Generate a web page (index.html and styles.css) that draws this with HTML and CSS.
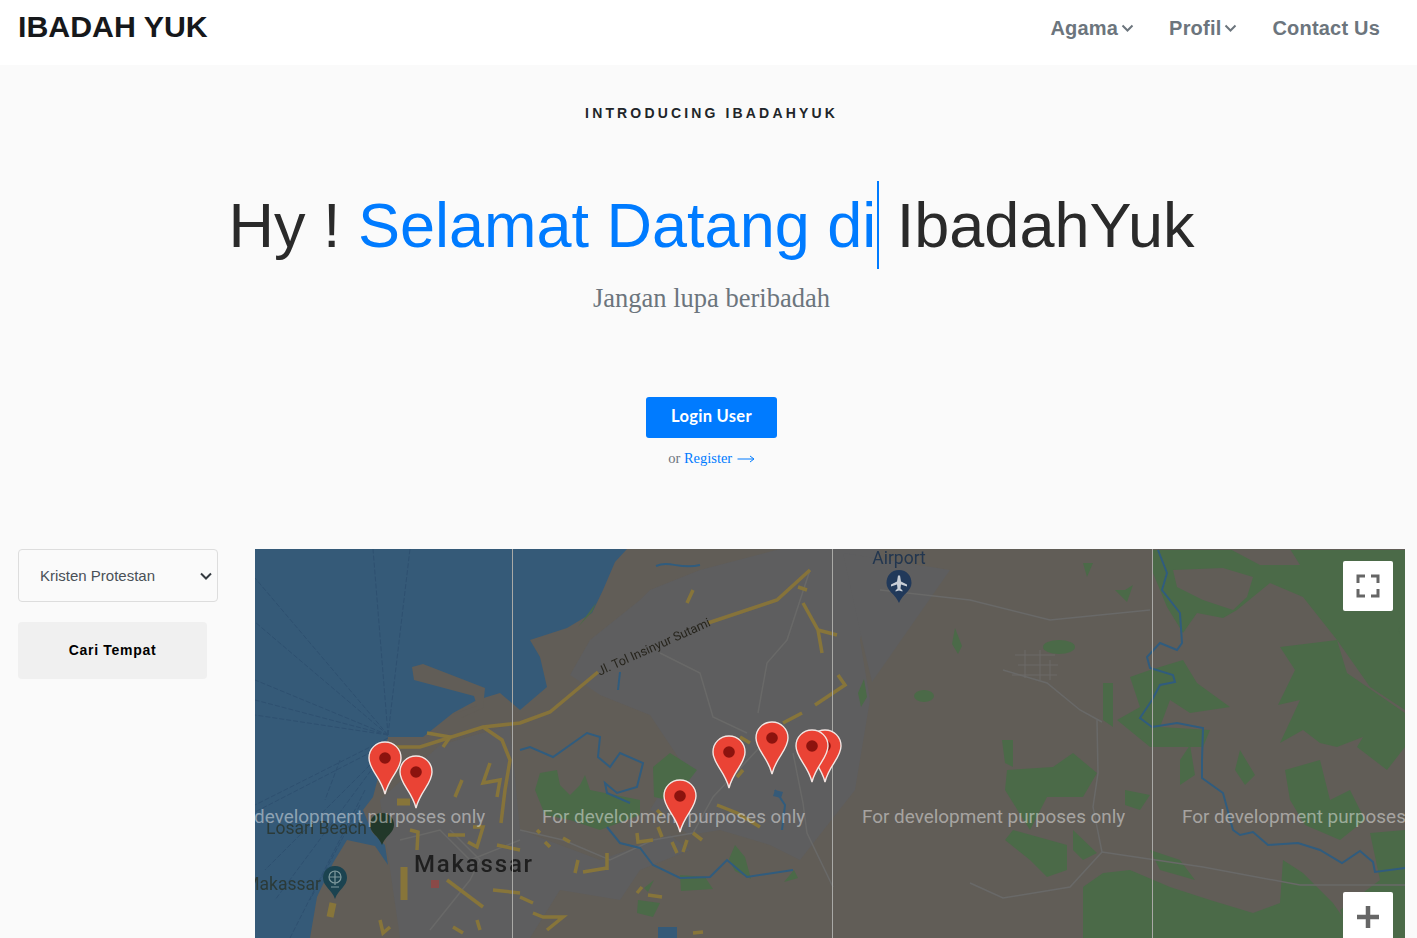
FILE: index.html
```html
<!DOCTYPE html>
<html lang="en">
<head>
  <meta charset="UTF-8" />
  <meta name="viewport" content="width=device-width, initial-scale=1.0" />
  <title>Ibadah Yuk</title>
  <link rel="stylesheet" href="styles.css">
</head>
<body>
  <nav class="navbar">
    <a class="brand" href="#">IBADAH YUK</a>
    <ul class="nav-links">
      <li><a href="#">Agama<svg class="caret" viewBox="0 0 12 8"><path d="M1 1.500l5 5 5-5"/></svg></a></li>
      <li><a href="#">Profil<svg class="caret" viewBox="0 0 12 8"><path d="M1 1.500l5 5 5-5"/></svg></a></li>
      <li><a href="#">Contact Us</a></li>
    </ul>
  </nav>

  <section class="hero">
    <p class="eyebrow">INTRODUCING IBADAHYUK</p>
    <h1 class="headline">Hy ! <span class="typed">Selamat Datang di</span> IbadahYuk</h1>
    <p class="tagline">Jangan lupa beribadah</p>
    <a class="btn-login" href="#">Login User</a>
    <p class="register">or <a href="#">Register <svg class="arrow" viewBox="0 0 17 8"><path d="M0 4h16M12.500 1l4 3-4 3"/></svg></a></p>
  </section>

  <section class="finder">
    <div class="filters">
      <div class="select-wrap">
        <select class="agama-select">
          <option>Kristen Protestan</option>
          <option>Islam</option>
          <option>Katolik</option>
          <option>Hindu</option>
          <option>Buddha</option>
        </select>
        <svg class="select-caret" viewBox="0 0 12 8"><path d="M1 1.500l5 5 5-5"/></svg>
      </div>
      <button class="btn-search">Cari Tempat</button>
    </div>

    <div class="map">
      <svg class="map-canvas" viewBox="255 549 1150 389">
        <defs>
          <symbol id="pin" viewBox="0 0 34 54">
            <path class="pin-body" d="M17 1C8 1 1 8 1 17c0 12 12 19 16 36 4-17 16-24 16-36C33 8 26 1 17 1z"/>
            <circle class="pin-dot" cx="17" cy="17" r="5.800"/>
          </symbol>
          <path id="tol" d="M598 672L725 615"/>
        </defs>

        <g class="basemap">
          <!-- sea and land -->
          <rect class="land" x="255" y="549" width="1150" height="389"/>
          <path class="water" d="M255 549H627L615 562 603 590 592 613 567 628 530 640 540 657 547 687 520 710 500 693 477 700 453 713 423 737 388 737 380 770 373 797 363 810 372 832 385 845 388 865 375 846 347 840 333 863 317 897 310 938H255z"/>
          <path class="land" d="M412 667l2 13 60 16 3 10-24 8 8 4 22-10 2-20-62-24z"/>

          <!-- ferry lanes -->
          <g class="lanes">
            <path d="M388 735L373 549M388 735L410 549M388 735L255 578M388 735L255 622M388 735L255 680M388 735L255 700M388 735L255 715"/>
            <path d="M388 738L255 805M385 745L255 812M380 755L265 870M375 765L275 900M365 790L290 938M360 805L310 900M340 760L325 800"/>
          </g>

          <!-- built up area and airport -->
          <path class="urban" d="M570 675L590 640 640 600 650 590 700 570 780 549H880L860 640 870 700 855 790 800 860 770 845 720 830 690 835 650 810 680 760 650 715 600 695z"/>
          <path class="urban" d="M380 800L440 745 510 725 520 830 600 860 670 835 690 850 640 870 620 900 560 890 530 938H400z"/>
          <path class="urban" d="M843 553L950 570 872 682 862 640z"/>

          <!-- forest -->
          <g class="forest">
            <path d="M1153 550H1405V710L1370 687 1337 640 1303 597 1270 583 1237 610 1223 618 1197 613 1183 633 1167 607 1153 573z"/>
            <path class="land" d="M1173 570L1223 568 1253 577 1247 597 1233 610 1203 600 1177 587zM1230 549H1290L1300 565 1260 565z"/>
            <path d="M1130 677L1150 670 1183 660 1197 683 1230 707 1190 713 1170 700 1160 727 1210 730 1203 747 1183 747 1150 747 1117 720 1140 707z"/>
            <path d="M1280 647L1337 640 1347 673 1405 713V747L1387 770 1357 747 1363 737 1337 747 1320 743 1303 730 1280 743 1300 700 1278 705 1295 670z"/>
            <path d="M1007 770L1053 767 1073 753 1097 773 1083 797 1047 797 1030 830 1005 790z"/>
            <path d="M1002 740L1013 740 1013 767 1005 763zM1103 683L1113 683 1113 727 1103 720zM1083 563L1093 563 1087 577zM1125 590L1133 585 1127 602 1115 590z"/>
            <path d="M1083 887L1103 873 1130 870 1170 887 1210 900 1253 913 1280 903 1283 860 1303 873 1333 903 1357 938H1083z"/>
            <path d="M1370 833L1405 830V938H1350L1340 910 1380 880z"/>
            <path d="M1013 830L1067 845 1067 870 1047 877 1030 860 1005 840zM1073 830L1097 853 1083 860 1073 850z"/>
            <path d="M1285 770L1320 760 1330 800 1350 790 1365 820 1340 840 1305 825 1290 800z"/>
            <path d="M1180 760L1190 745 1195 775 1180 785zM1125 790L1150 795 1140 810 1125 805zM1240 750L1255 775 1245 785 1235 770zM1150 850L1180 860 1195 880 1160 870z"/>
            <ellipse cx="1059" cy="647" rx="16" ry="7"/>
            <ellipse cx="924" cy="696" rx="10" ry="6"/>
            <path d="M858 693l6-14 3 18-6 10z"/>
            <path d="M955 628l7 18-4 8-6-10zM1398 630l7-8v20z"/>
            <path d="M653 767l17-14 27 17-10 13-5 20-28-6z"/>
            <path d="M540 773L557 770 560 785 570 795 580 785 585 775 590 790 640 800 640 815 600 830 570 820 545 815 535 790z"/>
            <path d="M735 845l10 12 6 22-16-8-6-12zM680 875l25 2 8 12-32 2zM638 900l22 3-7 14-16-4zM654 880l-6 12-4-4z"/>
            <path d="M794 870l-10 12 14-4zM592 612l-14 15 18-24z"/>
          </g>

          <!-- minor roads -->
          <g class="road">
            <path d="M660 653L700 673 713 717 747 733"/>
            <path d="M810 570L787 640 767 663 758 713"/>
            <path d="M760 747L713 797 693 833 653 840 610 860 563 840 520 830"/>
            <path d="M793 753L803 803 807 833 833 887"/>
            <path d="M400 840L440 830 470 860 520 840"/>
            <path d="M430 930L470 880 480 860 450 830"/>
            <path d="M1097 720L1098 773 1093 807 1102 852 1070 887 1003 898 970 883"/>
            <path d="M1003 670L1047 683 1080 710 1102 722"/>
            <path d="M1102 852L1203 867 1300 885 1405 885"/>
            <path d="M880 590L970 600 1050 620 1150 610"/>
          </g>

          <!-- rivers -->
          <g class="river">
            <path d="M1158 550L1167 573 1162 590 1180 613 1182 643 1177 650 1160 643 1147 657 1150 668 1173 675 1175 682 1160 685 1152 700 1140 718 1152 727 1177 723 1203 728 1202 760 1202 778 1223 793 1233 830 1240 835 1253 832 1268 845 1298 843 1320 850 1342 863 1360 851 1373 862 1375 872 1405 868"/>
            <path d="M520 750L530 747 553 757 587 733 600 737 598 757 610 767 620 753 643 763 637 787 617 793 605 783 607 793 630 803"/>
            <path d="M607 827L620 843 640 848 653 865 680 878 710 877 727 860 747 877 793 870"/>
            <path d="M656 566C670 560 680 570 700 565M775 790L785 805 782 830M620 672L618 690"/>
          </g>
          <path class="water" d="M658 927l19 0 0 11h-19zM775 790l8 2-2 6-8-2z"/>

          <!-- toll road and arterial streets -->
          <path class="highway" d="M396 747L420 747 483 727 520 723 550 712 598 672"/>
          <path class="highway" d="M708 623L777 600 810 570"/>
          <path class="highway" d="M483 727L502 740 510 760 505 790 501 823"/>
          <g class="street">
            <path d="M693 590l-6 13M798 587l9 3M803 603L818 630 822 653M818 630l19 5M838 675l7 10-30 20M802 713l-19 10"/>
            <path d="M740 737l10 6M743 770l-6 7M717 805l20 8 23 14M657 810l5 5M658 827l4 10M637 833l1 9 15-2M672 842l5 11M687 840l-4 12M693 833l9 7"/>
            <path d="M537 830l3 3M545 842l5 5M563 838l7 4M578 860l-3 13M607 853v17M583 872l24-4M648 895l14 2M637 893l5-6M693 933l10-1"/>
            <path d="M520 897l13 6M533 913l10 4 20 0-16 13"/>
            <path d="M427 733l23 4-7 10M490 763l-7 20 17-3-3 17M462 780l-7 17M448 835h17M473 827h10l-6 20-9-5"/>
            <path d="M410 830l8 2-1 18M447 880l36 27M497 845l23 5M493 890l27 3M380 920l3 13 7-6M453 927l10 6M477 920l3 10"/>
          </g>
          <path class="street-thick" d="M333 903l-3 14M397 802h13M404 867v33"/>

          <!-- faint town grid -->
          <path class="road road-faint" d="M1015 655h40M1018 665h40M1012 675h45M1025 650v28M1040 650v30M1050 660v20"/>

          <!-- labels -->
          <text class="road-label" dy="4"><textPath href="#tol">Jl. Tol Insinyur Sutami</textPath></text>
          <text class="label label-navy" x="899" y="564" text-anchor="middle">Airport</text>
          <text class="label" x="266" y="834">Losari Beach</text>
          <text class="label" x="321" y="890" text-anchor="end">Makassar</text>
          <text class="city" x="414" y="872">Makassar</text>

          <!-- places -->
          <path class="poi-navy" d="M899 570c-8 0-12.500 6-12.500 13 0 8 9 11 12.500 20 3.500-9 12.500-12 12.500-20 0-7-4.500-13-12.500-13z"/>
          <path class="poi-icon" d="M898 575.500h2l1 6 6 3v2l-6-2-.5 4 2 2v1l-3.500-1-3.500 1v-1l2-2-.5-4-6 2v-2l6-3z"/>
          <path class="poi-green" d="M382 813c-8 0-12 6-12 12 0 8 9 11 12 20 3-9 12-12 12-20 0-6-4-12-12-12z"/>
          <path class="poi-teal" d="M335 866c-8 0-12 6-12 12 0 8 9 12 12 21 3-9 12-13 12-21 0-6-4-12-12-12z"/>
          <circle class="poi-ring" cx="335" cy="877" r="6"/>
          <path class="poi-ring" d="M335 871v14M329 877h12M331 887h8"/>
          <rect class="poi-red" x="431" y="880" width="8" height="8"/>
        </g>

        <!-- tile seams -->
        <path class="seam" d="M512.500 549V938M832.500 549V938M1152.500 549V938"/>

        <!-- dev watermark -->
        <text class="watermark" x="222" y="823">For development purposes only</text>
        <text class="watermark" x="542" y="823">For development purposes only</text>
        <text class="watermark" x="862" y="823">For development purposes only</text>
        <text class="watermark" x="1182" y="823">For development purposes only</text>

        <!-- markers -->
        <use href="#pin" x="368" y="741" width="34" height="54"/>
        <use href="#pin" x="399" y="755" width="34" height="54"/>
        <use href="#pin" x="663" y="779" width="34" height="54"/>
        <use href="#pin" x="712" y="735" width="34" height="54"/>
        <use href="#pin" x="755" y="721" width="34" height="54"/>
        <use href="#pin" x="808" y="729" width="34" height="54"/>
        <use href="#pin" x="795" y="729" width="34" height="54"/>
      </svg>

      <button class="map-btn map-btn-full" aria-label="Fullscreen">
        <svg viewBox="0 0 24 24"><path d="M2 9V2h7M15 2h7v7M22 15v7h-7M9 22H2v-7"/></svg>
      </button>
      <button class="map-btn map-btn-zoom" aria-label="Zoom in">
        <svg viewBox="0 0 24 24"><path d="M12 1v22M1 12h22"/></svg>
      </button>
    </div>
  </section>
</body>
</html>
```

FILE: styles.css
```css
html, body {
  height: 100%;
}
body {
  margin: 0;
  overflow: hidden;
  background-color: #fafafa;
  font-family: "Liberation Serif", serif;
}
.navbar {
  height: 65px;
  padding: 0 37px 0 18px;
  display: flex;
  justify-content: space-between;
  align-items: flex-start;
  background-color: #ffffff;
}
.brand {
  margin-top: 9px;
  font-family: "Liberation Sans", Arial, sans-serif;
  font-size: 30.300px;
  font-weight: 700;
  line-height: 36px;
  color: #16181b;
  text-decoration: none;
}
.nav-links {
  margin: 0;
  padding: 16px 0 0;
  list-style: none;
  display: flex;
  gap: 35px;
}
.nav-links a {
  display: flex;
  align-items: center;
  gap: 3px;
  font-family: "Liberation Sans", Arial, sans-serif;
  font-size: 20px;
  font-weight: 700;
  line-height: 24px;
  letter-spacing: 0.200px;
  color: #6c757d;
  text-decoration: none;
}
.caret {
  width: 13px;
  height: 8px;
  fill: none;
  stroke: #6c757d;
  stroke-width: 2;
}

.hero {
  padding: 39px 12px 0 18px;
  height: 484px;
  box-sizing: border-box;
  text-align: center;
}
.eyebrow {
  margin: 0;
  font-family: "Liberation Sans", Arial, sans-serif;
  font-size: 14px;
  font-weight: 700;
  line-height: 18px;
  letter-spacing: 3.150px;
  color: #212529;
}
.headline {
  margin: 59px 0 0;
  font-family: "Liberation Sans", Arial, sans-serif;
  font-size: 63px;
  font-weight: 400;
  line-height: 88px;
  color: #2a2a2a;
}
.typed {
  display: inline-block;
  padding-right: 1px;
  border-right: 2px solid #007bff;
  color: #007bff;
}
.tagline {
  margin: 11px 0 0;
  font-size: 26.500px;
  line-height: 36px;
  color: #6c757d;
}
.btn-login {
  display: block;
  width: 131px;
  height: 41px;
  margin: 81px auto 0;
  border-radius: 3px;
  background-color: #007bff;
  font-family: Lato, sans-serif;
  font-size: 16.500px;
  font-weight: 700;
  line-height: 38px;
  letter-spacing: 0.300px;
  color: #ffffff;
  text-decoration: none;
}
.register {
  margin: 10px 0 0;
  font-size: 14.500px;
  line-height: 20px;
  color: #6c757d;
}
.register a {
  color: #007bff;
  text-decoration: none;
}
.arrow {
  width: 18px;
  height: 8px;
  margin-left: 1px;
  fill: none;
  stroke: #007bff;
  stroke-width: 1;
}

.finder {
  display: flex;
  padding: 0 12px 0 18px;
  gap: 37px;
}
.filters {
  width: 200px;
  flex-shrink: 0;
}
.select-wrap {
  position: relative;
}
.agama-select {
  display: block;
  width: 200px;
  height: 53px;
  padding: 0 0 0 21px;
  appearance: none;
  border: 1px solid #dddddd;
  border-radius: 4px;
  background-color: #fafafa;
  font-family: "Liberation Sans", Arial, sans-serif;
  font-size: 15px;
  color: #495057;
}
.select-caret {
  position: absolute;
  top: 23px;
  right: 6px;
  width: 12px;
  height: 8px;
  fill: none;
  stroke: #343a40;
  stroke-width: 2;
  pointer-events: none;
}
.btn-search {
  display: block;
  width: 189px;
  height: 57px;
  margin-top: 20px;
  padding: 0 0 2px;
  border: none;
  border-radius: 4px;
  background-color: #f0f0f0;
  font-family: "Liberation Sans", Arial, sans-serif;
  font-size: 14px;
  font-weight: 700;
  letter-spacing: 0.700px;
  color: #000000;
}

.map {
  position: relative;
  flex: 1;
  height: 389px;
  overflow: hidden;
}
.map-canvas {
  display: block;
  width: 100%;
  height: 100%;
}
.basemap {
  filter: blur(0.5px);
}
.land { fill: #615d57; }
.water { fill: #355a78; }
.urban { fill: #5e5e5f; }
.forest { fill: #4b6a48; }
.forest .land { fill: #615d57; }
.lanes {
  fill: none;
  stroke: #2e5070;
  stroke-width: 1;
  stroke-dasharray: 5 2;
}
.road {
  fill: none;
  stroke: #696968;
  stroke-width: 1.500;
}
.road-faint {
  stroke: #6c6b68;
  stroke-width: 1;
}
.river {
  fill: none;
  stroke: #305c7e;
  stroke-width: 2;
}
.highway {
  fill: none;
  stroke: #86733a;
  stroke-width: 3.500;
}
.street {
  fill: none;
  stroke: #87753a;
  stroke-width: 3.500;
}
.street-thick {
  fill: none;
  stroke: #87753a;
  stroke-width: 7;
}
.seam {
  stroke: #a9a9a6;
  stroke-width: 1;
}
.road-label {
  font-family: Roboto, sans-serif;
  font-size: 12.500px;
  fill: #26241c;
}
.label {
  font-family: Roboto, sans-serif;
  font-size: 17.500px;
  fill: #2b3a38;
}
.label-navy { fill: #22364f; }
.city {
  font-family: Roboto, sans-serif;
  font-size: 24px;
  font-weight: 500;
  letter-spacing: 1.800px;
  fill: #1f1f1f;
}
.watermark {
  font-family: Roboto, sans-serif;
  font-size: 18.900px;
  fill: rgba(255, 255, 255, 0.45);
}
.poi-navy { fill: #21395a; }
.poi-icon { fill: #c8ced6; }
.poi-green { fill: #22382a; }
.poi-teal { fill: #1b4350; }
.poi-ring {
  fill: none;
  stroke: #7f9a9e;
  stroke-width: 1.200;
}
.poi-red { fill: #8a4a48; }
.pin-body {
  fill: #ea4335;
  stroke: #f2e6e3;
  stroke-width: 1.400;
}
.pin-dot { fill: #8c130e; }

.map-btn {
  position: absolute;
  right: 12px;
  width: 50px;
  height: 50px;
  padding: 0;
  display: flex;
  align-items: center;
  justify-content: center;
  border: none;
  border-radius: 2px;
  background-color: #ffffff;
}
.map-btn svg {
  width: 24px;
  height: 24px;
  fill: none;
  stroke: #666666;
  stroke-width: 3;
}
.map-btn-full { top: 12px; }
.map-btn-zoom { top: 343px; }
.map-btn-zoom svg { stroke-width: 4.500; }
```
